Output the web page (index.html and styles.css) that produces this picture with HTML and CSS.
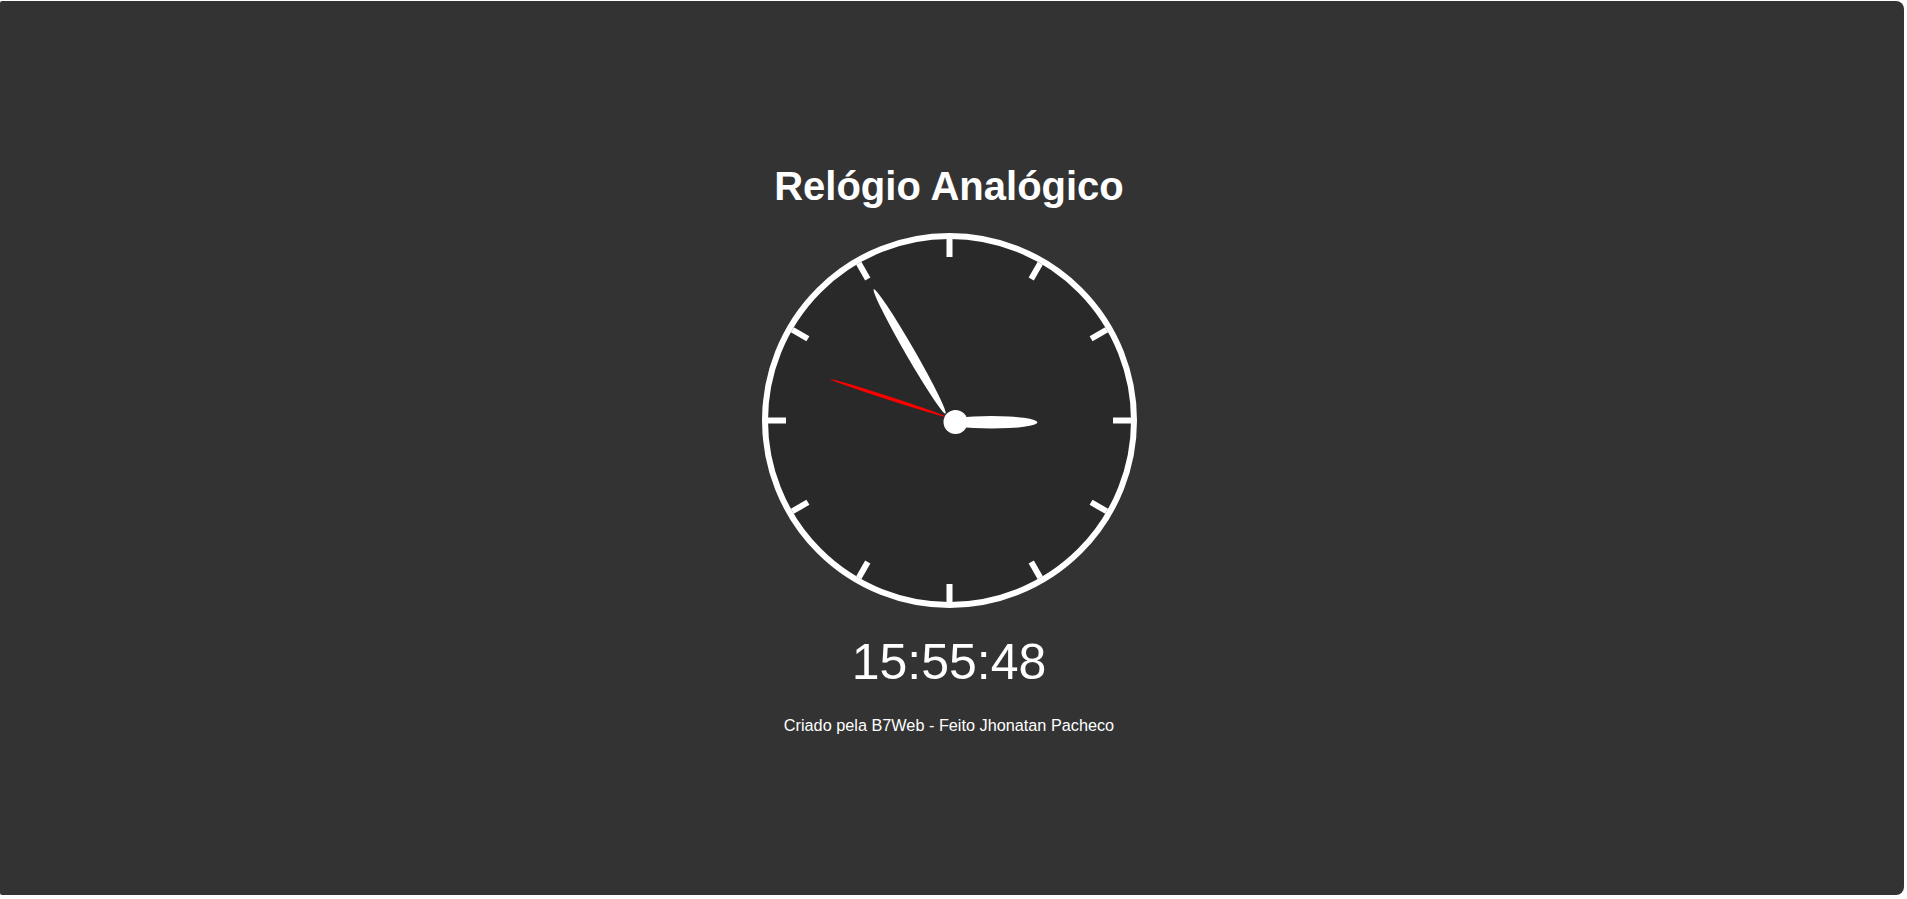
FILE: index.html
```html
<!DOCTYPE html>
<html lang="pt-BR">
<head>
<meta charset="utf-8">
<title>Relógio Analógico</title>
<link rel="stylesheet" href="styles.css">
</head>
<body>
<div class="page">
  <div class="content">
    <h1 class="title">Relógio Analógico</h1>
    <div class="clock">
      <svg width="375" height="375" viewBox="0 0 375 375">
        <circle class="face" cx="187.5" cy="187.5" r="184.5"/>
        <g class="marks">
          <rect x="184.5" y="6" width="6" height="18" transform="rotate(0 187.5 187.5)"/>
          <rect x="184.5" y="6" width="6" height="18" transform="rotate(30 187.5 187.5)"/>
          <rect x="184.5" y="6" width="6" height="18" transform="rotate(60 187.5 187.5)"/>
          <rect x="184.5" y="6" width="6" height="18" transform="rotate(90 187.5 187.5)"/>
          <rect x="184.5" y="6" width="6" height="18" transform="rotate(120 187.5 187.5)"/>
          <rect x="184.5" y="6" width="6" height="18" transform="rotate(150 187.5 187.5)"/>
          <rect x="184.5" y="6" width="6" height="18" transform="rotate(180 187.5 187.5)"/>
          <rect x="184.5" y="6" width="6" height="18" transform="rotate(210 187.5 187.5)"/>
          <rect x="184.5" y="6" width="6" height="18" transform="rotate(240 187.5 187.5)"/>
          <rect x="184.5" y="6" width="6" height="18" transform="rotate(270 187.5 187.5)"/>
          <rect x="184.5" y="6" width="6" height="18" transform="rotate(300 187.5 187.5)"/>
          <rect x="184.5" y="6" width="6" height="18" transform="rotate(330 187.5 187.5)"/>
        </g>
        <g transform="translate(187.5 187.5)">
          <ellipse class="hand" cx="42" cy="1.8" rx="46" ry="6.3"/>
          <ellipse class="hand" cx="0" cy="0" rx="71.7" ry="4.6" transform="translate(-39.85 -69.1) rotate(60)"/>
          <ellipse class="hand-sec" cx="0" cy="0" rx="60.5" ry="1.7" transform="translate(-61.5 -22.6) rotate(18)"/>
          <circle class="hand" cx="6" cy="1.5" r="12"/>
        </g>
      </svg>
    </div>
    <div class="time">15:55:48</div>
    <div class="footer">Criado pela B7Web - Feito Jhonatan Pacheco</div>
  </div>
</div>
</body>
</html>
```
FILE: styles.css
```css
html, body {
  margin: 0;
}

body {
  background: #ffffff;
  padding: 1px 3px 4px 0;
}

.page {
  height: 894px;
  box-sizing: border-box;
  background: #333333;
  border-radius: 2px 8px 8px 2px;
  padding: 162px 6px 0 0;
  font-family: "Liberation Sans", Arial, sans-serif;
  color: #ffffff;
}

.content {
  display: flex;
  flex-direction: column;
  align-items: center;
}

.title {
  margin: 0;
  font-size: 40px;
  line-height: 46px;
  font-weight: bold;
}

.clock {
  margin-top: 24px;
  width: 375px;
  height: 375px;
}

.clock svg {
  display: block;
}

.face {
  fill: #292929;
  stroke: #ffffff;
  stroke-width: 6;
}

.marks rect {
  fill: #ffffff;
}

.hand {
  fill: #ffffff;
}

.hand-sec {
  fill: #ff0000;
}

.time {
  margin-top: 25px;
  font-size: 50px;
  line-height: 58px;
}

.footer {
  margin-top: 25px;
  font-size: 16.25px;
  line-height: 18px;
}
```
